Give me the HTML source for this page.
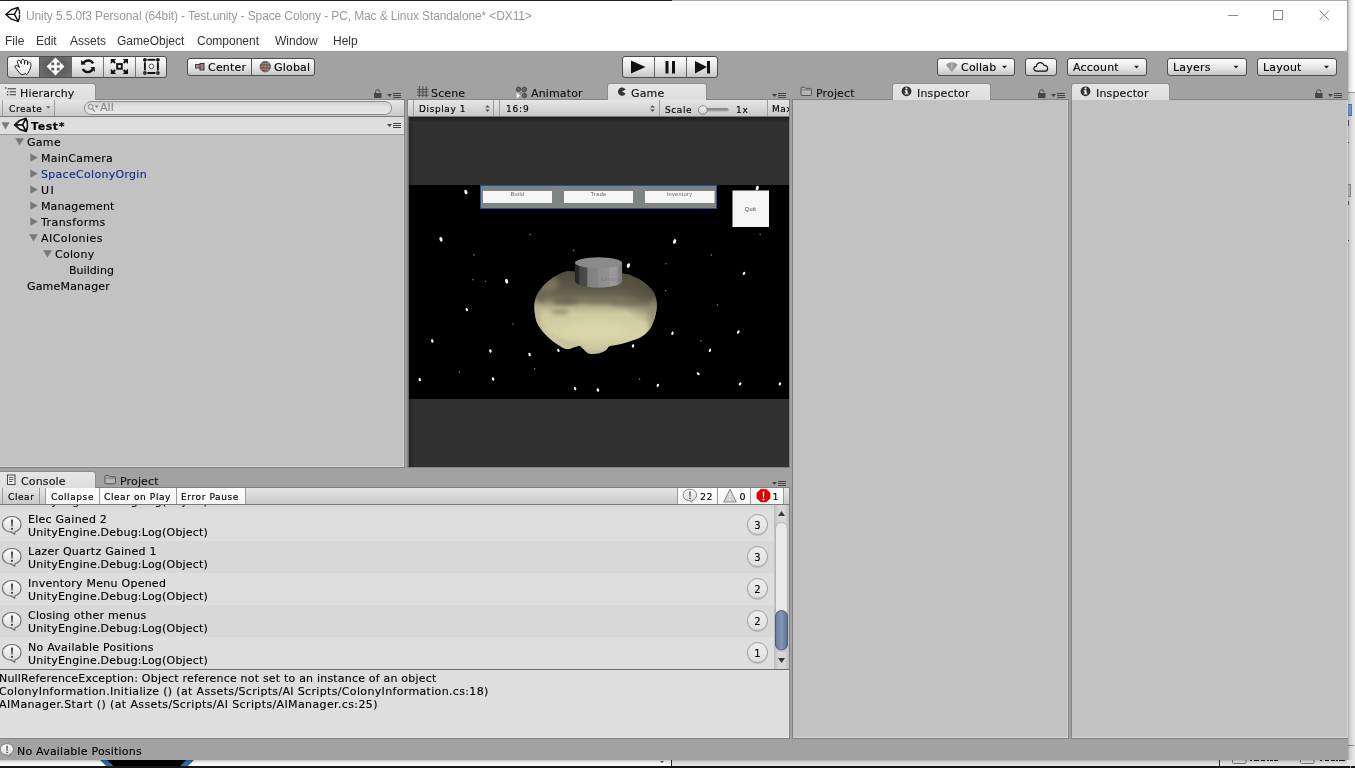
<!DOCTYPE html>
<html><head><meta charset="utf-8"><title>Unity</title>
<style>
*{box-sizing:border-box;margin:0;padding:0}
html,body{width:1355px;height:768px;overflow:hidden;background:#fff}
body{position:relative;font-family:"DejaVu Sans","Liberation Sans",sans-serif;font-size:11px;color:#000;letter-spacing:.3px;-webkit-text-stroke:.12px currentColor}
#win div,#win span,#win svg{position:absolute;white-space:nowrap}
#win{will-change:transform;position:absolute;left:0;top:0;width:1348px;height:760px;background:#a2a2a2;overflow:hidden}
#title{-webkit-text-stroke:0;left:0;top:1px;width:1347px;height:30px;background:#fff;font-family:"Liberation Sans",sans-serif;font-size:12px;color:#999;letter-spacing:-.12px}
#menu{-webkit-text-stroke:0;left:0;top:31px;width:1347px;height:20px;background:#fff;border-bottom:1px solid #f0f0f0;font-family:"Liberation Sans",sans-serif;font-size:12px;color:#333;letter-spacing:0}
#menu span{position:absolute;top:3px}
.btn{position:absolute;border:1px solid #4c4c4c;border-radius:3px;background:linear-gradient(#fefefe,#e8e8e8 50%,#c6c6c6);}
.tab{position:absolute;top:83px;height:17px;background:linear-gradient(#e6e6e6,#dedede);border:1px solid #8e8e8e;border-bottom:none;border-radius:3px 3px 0 0;z-index:3}
.tabtxt{z-index:4;position:absolute;top:87px;font-size:11px;letter-spacing:.15px;color:#111}
.panel{position:absolute;background:#c2c2c2;border:1px solid #828282;box-shadow:inset -1px -1px 0 rgba(255,255,255,.3)}
.tb{position:absolute;height:17px;background:linear-gradient(#e6e6e6,#c8c8c8);border-bottom:1px solid #7a7a7a}
.badge{position:absolute;width:21px;height:21px;border-radius:11px;background:linear-gradient(#ececec,#e0e0e0);border:1px solid #a0a0a0;box-shadow:0 1px 0 #bbb;text-align:center;line-height:20px;padding-top:1px;letter-spacing:0;font-size:10px}
.t9{font-size:9px;letter-spacing:.6px;-webkit-text-stroke:.15px currentColor}
.o{position:absolute}
</style></head><body>

<!-- OUTSIDE: other windows behind -->
<div id="out" style="position:absolute;left:0;top:0;width:1355px;height:768px;overflow:hidden">
 <div class="o" style="left:1347px;top:0;width:8px;height:92px;background:#fff"></div>
 <div class="o" style="left:1347px;top:92px;width:8px;height:676px;background:#e8e8e8;border-top:1px solid #9c9c9c"></div>
 <div class="o" style="left:1348px;top:104px;width:4px;height:12px;background:#7aa7dc;border:1px solid #4f82bd;border-left:none;border-radius:1px"></div>
 <div class="o" style="left:1348px;top:120px;width:1px;height:6px;background:#a04060"></div><div class="o" style="left:1348px;top:142px;width:1px;height:1px;background:#3050a0"></div><div class="o" style="left:1348px;top:240px;width:1px;height:1px;background:#3050a0"></div><div class="o" style="left:1348px;top:201px;width:1px;height:4px;background:#a04060"></div>
 <div class="o" style="left:1347px;top:184px;width:4px;height:13px;background:#c8c8c8;border:1px solid #999"></div>
 <div class="o" style="left:1347px;top:745px;width:7px;height:1px;background:#8a8a8a"></div>
 <div class="o" style="left:1348px;top:0;width:7px;height:768px;background:linear-gradient(to right,rgba(0,0,0,.26),rgba(0,0,0,.12) 25%,rgba(0,0,0,.04) 60%,rgba(0,0,0,0))"></div>
 <div class="o" style="left:0;top:760px;width:672px;height:8px;background:#fff"></div>
 <div class="o" style="left:672px;top:760px;width:683px;height:8px;background:#e6e6e6"></div>
 <svg class="o" style="left:0;top:760px" width="1355" height="8" viewBox="0 760 1355 8"><path d="M100 760L194 760L186 768L108 768Z" fill="#2e6da8"/><path d="M107 760L186 760L178.5 768L115.5 768Z" fill="#000"/><path d="M660 761L664 761L662 763Z" fill="#444"/><rect x="671" y="760" width="1" height="6" fill="#222"/><rect x="1219" y="760" width="1" height="6" fill="#333"/>
 <path d="M1232.5 760L1232.5 762.5Q1232.5 763.5 1233.5 763.5L1245 763.5Q1246 763.5 1246 762.5L1246 760M1300.500 760L1300.5 762.5Q1300.5 763.5 1301.5 763.5L1313 763.5Q1314 763.5 1314 762.5L1314 760" fill="none" stroke="#777" stroke-width="1"/>
 <g fill="#222"><rect x="1250" y="760" width="2" height="1"/><rect x="1254" y="760" width="5" height="1"/><rect x="1261" y="760" width="4" height="1"/><rect x="1267" y="760" width="2" height="1"/><rect x="1270" y="760" width="3" height="1"/><rect x="1274" y="760" width="4" height="1"/><rect x="1320" y="760" width="2" height="1"/><rect x="1325" y="760" width="4" height="1"/><rect x="1331" y="760" width="4" height="1"/><rect x="1336" y="760" width="2" height="1"/><rect x="1339" y="760" width="3" height="1"/><rect x="1342" y="760" width="3" height="1"/></g></svg>
 <div class="o" style="left:0;top:760px;width:1347px;height:6px;background:linear-gradient(rgba(0,0,0,.24),rgba(0,0,0,.1) 30%,rgba(0,0,0,.02) 70%,rgba(0,0,0,0))"></div>
 <div class="o" style="left:0;top:766px;width:1355px;height:2px;background:#151515"></div>
 <div class="o" style="left:1350px;top:766px;width:1px;height:2px;background:#999"></div>
</div>
<div id="win" class="abs">
<div style="left:0;top:0;width:672px;height:1px;background:#222"></div>
<div style="left:672px;top:0;width:675px;height:1px;background:#aaa"></div>
<div id="title"><span style="position:absolute;left:26px;top:8px;white-space:nowrap">Unity 5.5.0f3 Personal (64bit) - Test.unity - Space Colony - PC, Mac &amp; Linux Standalone* &lt;DX11&gt;</span></div>
<div id="menu"><span style="left:5px">File</span><span style="left:36px">Edit</span><span style="left:70px">Assets</span><span style="left:117px">GameObject</span><span style="left:197px">Component</span><span style="left:275px">Window</span><span style="left:333px">Help</span></div>

<!-- transform tools -->
<div class="btn" style="left:7px;top:56px;width:160px;height:22px;overflow:hidden">
 <div style="left:31px;top:0;width:33px;height:20px;background:radial-gradient(ellipse at center,#585858 25%,#727272 100%)"></div>
 <div style="left:31px;top:0;width:1px;height:20px;background:#555"></div>
 <div style="left:63px;top:0;width:1px;height:20px;background:#666"></div>
 <div style="left:95px;top:0;width:1px;height:20px;background:#777"></div>
 <div style="left:127px;top:0;width:1px;height:20px;background:#777"></div>
</div>
<!-- center/global -->
<div class="btn" style="left:187px;top:58px;width:128px;height:18px">
 <div style="left:63px;top:0;width:1px;height:16px;background:#555"></div>
 <span style="left:20px;top:2px;font-size:11px;letter-spacing:.2px">Center</span>
 <span style="left:86px;top:2px;font-size:11px;letter-spacing:.2px">Global</span>
</div>
<!-- play -->
<div class="btn" style="left:622px;top:56px;width:96px;height:22px">
 <div style="left:31px;top:0;width:1px;height:20px;background:#666"></div>
 <div style="left:63px;top:0;width:1px;height:20px;background:#666"></div>
 <svg style="left:0;top:0" width="94" height="20" viewBox="0 0 94 20"><path d="M8 3.5 L22.5 10 L8 16.5Z" fill="#111"/><rect x="42.5" y="4" width="3" height="12.5" fill="#111"/><rect x="49" y="4" width="3" height="12.5" fill="#111"/><path d="M72 4 L84 10 L72 16.5Z" fill="#111"/><rect x="84" y="4" width="3" height="12.5" fill="#111"/></svg>
</div>
<!-- right buttons -->
<div class="btn" style="left:937px;top:58px;width:78px;height:18px"><span style="left:23px;top:2px;font-size:11px;letter-spacing:.2px">Collab</span></div>
<div class="btn" style="left:1025px;top:58px;width:32px;height:18px"></div>
<div class="btn" style="left:1067px;top:58px;width:80px;height:18px"><span style="left:5px;top:2px;font-size:11px;letter-spacing:.2px">Account</span></div>
<div class="btn" style="left:1167px;top:58px;width:80px;height:18px"><span style="left:5px;top:2px;font-size:11px;letter-spacing:.2px">Layers</span></div>
<div class="btn" style="left:1257px;top:58px;width:80px;height:18px"><span style="left:5px;top:2px;font-size:11px;letter-spacing:.2px">Layout</span></div>
<!-- TOOLBAR -->

<!-- ============ HIERARCHY PANEL ============ -->
<div class="tab" style="left:-4px;width:100px"></div>
<span class="tabtxt" style="left:20px">Hierarchy</span>
<div class="panel" style="left:-1px;top:99px;width:406px;height:369px">
 <div class="tb" style="left:0;top:0;width:404px"></div>
 <div style="left:0;top:17px;width:404px;height:18px;background:#dedede;border-bottom:1px solid #9a9a9a"></div>
</div>
<div style="left:2px;top:100px;width:1px;height:16px;background:#9a9a9a"></div>
<div style="left:54px;top:100px;width:1px;height:16px;background:#9a9a9a"></div>
<span class="t9" style="left:9px;top:104px">Create</span>
<div style="left:84px;top:101px;width:308px;height:14px;border:1px solid #8e8e8e;border-radius:7px;background:linear-gradient(#cfcfcf,#e2e2e2 40%,#e6e6e6)"></div>
<span style="left:100px;top:101px;font-size:11px;color:#8a8a8a;letter-spacing:.1px">All</span>
<span style="left:31px;top:120px;font-size:11px;font-weight:bold;letter-spacing:.6px">Test*</span>
<svg style="left:0;top:134px" width="60" height="130" viewBox="0 134 60 130"><g fill="#777"><path d="M15.2 138.2L23.8 138.2L19.5 145.6Z"/><path d="M30.3 153.5L37.9 157.6L30.3 161.7Z"/><path d="M30.3 169.5L37.9 173.6L30.3 177.7Z"/><path d="M30.3 185.5L37.9 189.6L30.3 193.7Z"/><path d="M30.3 201.5L37.9 205.6L30.3 209.7Z"/><path d="M30.3 217.5L37.9 221.6L30.3 225.7Z"/><path d="M29.2 234.2L37.8 234.2L33.5 241.6Z"/><path d="M43.2 250.2L51.8 250.2L47.5 257.6Z"/></g></svg>
<div id="hier" style="left:0;top:0;letter-spacing:.3px">
<span style="left:27px;top:136px">Game</span>
<span style="left:41px;top:152px;letter-spacing:0.27px">MainCamera</span>
<span style="left:41px;top:168px;color:#102c90">SpaceColonyOrgin</span>
<span style="left:41px;top:184px;letter-spacing:1.5px">UI</span>
<span style="left:41px;top:200px;letter-spacing:0.1px">Management</span>
<span style="left:41px;top:216px;letter-spacing:0.43px">Transforms</span>
<span style="left:41px;top:232px;letter-spacing:0.43px">AIColonies</span>
<span style="left:55px;top:248px">Colony</span>
<span style="left:69px;top:264px;letter-spacing:0.04px">Building</span>
<span style="left:27px;top:280px;letter-spacing:0.18px">GameManager</span>
</div>
<!-- ============ GAME PANEL ============ -->
<span class="tabtxt" style="left:431px">Scene</span>
<span class="tabtxt" style="left:531px">Animator</span>
<div class="tab" style="left:607px;width:100px"></div>
<span class="tabtxt" style="left:631px">Game</span>
<div class="panel" style="left:407px;top:99px;width:383px;height:369px;background:#313131">
 <div class="tb" style="left:0;top:0;width:381px"></div>
</div>

<div style="left:413px;top:100px;width:1px;height:16px;background:#9a9a9a"></div><div style="left:493px;top:100px;width:1px;height:16px;background:#9a9a9a"></div><div style="left:499px;top:100px;width:1px;height:16px;background:#9a9a9a"></div><div style="left:659px;top:100px;width:1px;height:16px;background:#9a9a9a"></div><div style="left:767px;top:100px;width:1px;height:16px;background:#9a9a9a"></div>
<span class="t9" style="left:419px;top:104px">Display 1</span>
<span class="t9" style="left:506px;top:104px;letter-spacing:.8px">16:9</span>
<span class="t9" style="left:665px;top:105px">Scale</span>
<span class="t9" style="left:736px;top:105px;letter-spacing:.8px">1x</span>
<span class="t9" style="left:772px;top:104px;width:17px;overflow:hidden">Max</span>
<!--GV--><svg style="left:408px;top:117px" width="381" height="350" viewBox="408 117 381 350">
<defs>
<linearGradient id="ag" gradientUnits="userSpaceOnUse" x1="0" y1="271" x2="0" y2="354"><stop offset="0" stop-color="#4e4b3b"/><stop offset=".2" stop-color="#5c5846"/><stop offset=".29" stop-color="#6b6752"/><stop offset=".37" stop-color="#8f896e"/><stop offset=".44" stop-color="#b8b28f"/><stop offset=".52" stop-color="#d0caa1"/><stop offset=".77" stop-color="#d9d3a9"/><stop offset=".93" stop-color="#cdc79e"/><stop offset="1" stop-color="#b9b38e"/></linearGradient><clipPath id="acl"><path d="M575.2 271.5C565.7 271.1 568.8 270.9 565.8 271.5C562.9 272.1 560.1 273.5 557.2 275.1C554.4 276.6 551.3 278.7 548.7 280.8C546.0 283.0 543.5 285.5 541.5 288.0C539.5 290.5 537.7 293.1 536.5 295.8C535.3 298.6 534.6 301.3 534.3 304.4C534.1 307.5 534.6 311.4 535.0 314.5C535.5 317.6 535.9 320.2 537.2 323.1C538.5 325.9 540.7 328.9 542.9 331.7C545.2 334.4 548.2 337.3 550.8 339.5C553.4 341.8 556.4 343.8 558.7 345.3C561.0 346.8 562.6 348.0 564.4 348.6C566.2 349.2 567.5 349.2 569.4 348.9C571.3 348.5 574.1 347.1 575.9 346.7C577.7 346.3 578.9 345.8 580.2 346.3C581.5 346.8 582.6 348.5 583.8 349.6C584.9 350.7 585.9 352.1 587.3 352.9C588.8 353.6 590.2 353.9 592.3 353.9C594.5 353.9 598.0 353.5 600.2 352.9C602.5 352.3 604.4 351.4 606.0 350.3C607.5 349.2 607.6 347.2 609.5 346.3C611.5 345.4 614.2 345.6 617.4 344.8C620.6 344.1 625.1 342.9 628.9 341.7C632.7 340.4 637.0 339.3 640.3 337.4C643.7 335.5 646.7 333.1 648.9 330.2C651.2 327.4 652.7 323.5 654.0 320.2C655.2 316.9 655.9 313.0 656.4 310.2C656.9 307.3 657.1 305.6 656.8 303.0C656.5 300.4 656.0 297.2 654.7 294.4C653.4 291.7 651.1 288.8 648.9 286.5C646.8 284.3 644.4 282.5 641.8 280.8C639.1 279.1 636.4 277.7 633.2 276.5C630.0 275.3 632.1 274.5 622.4 273.6C612.8 272.8 584.6 271.8 575.2 271.5Z"/></clipPath><radialGradient id="ard" gradientUnits="userSpaceOnUse" cx="652" cy="290" r="34"><stop offset="0" stop-color="#4e4b3b" stop-opacity=".85"/><stop offset="1" stop-color="#4e4b3b" stop-opacity="0"/></radialGradient><filter id="bl2"><feGaussianBlur stdDeviation="2.2"/></filter>
<radialGradient id="ar" cx=".5" cy=".6" r=".55"><stop offset=".7" stop-color="#000" stop-opacity="0"/><stop offset="1" stop-color="#3a3828" stop-opacity=".55"/></radialGradient>
<linearGradient id="cg" x1="0" y1="0" x2="1" y2="0"><stop offset="0" stop-color="#262626"/><stop offset=".09" stop-color="#2c2c2c"/><stop offset=".1" stop-color="#444"/><stop offset=".26" stop-color="#4d4d4d"/><stop offset=".27" stop-color="#808080"/><stop offset=".49" stop-color="#858585"/><stop offset=".5" stop-color="#8d8d8d"/><stop offset=".72" stop-color="#929292"/><stop offset=".73" stop-color="#9a9a9a"/><stop offset=".9" stop-color="#969696"/><stop offset=".91" stop-color="#848484"/><stop offset="1" stop-color="#7a7a7a"/></linearGradient>
<filter id="bl"><feGaussianBlur stdDeviation=".5"/></filter>
<linearGradient id="shv" x1="0" y1="0" x2="0" y2="1"><stop offset="0" stop-color="#1c1c1c"/><stop offset="1" stop-color="#313131"/></linearGradient><linearGradient id="sh" x1="0" y1="0" x2="1" y2="0"><stop offset="0" stop-color="#222"/><stop offset="1" stop-color="#313131"/></linearGradient>
</defs>
<rect x="408" y="117" width="381" height="350" fill="#313131"/>
<rect x="408" y="117" width="7" height="350" fill="url(#sh)"/>
<rect x="408" y="117" width="381" height="6" fill="url(#shv)"/><rect x="408" y="185" width="381" height="214" fill="#000"/>
<rect x="408" y="117" width="1" height="350" fill="#6a6a6a"/><g fill="#fff" filter="url(#bl)"><ellipse cx="465.9" cy="192.0" rx="1.5" ry="2.4" transform="rotate(-20 465.9 192.0)"/><ellipse cx="757.2" cy="188.0" rx="1.5" ry="2.4" transform="rotate(20 757.2 188.0)"/><ellipse cx="441.0" cy="239.3" rx="1.5" ry="2.4" transform="rotate(-20 441.0 239.3)"/><ellipse cx="674.6" cy="241.4" rx="1.5" ry="2.4" transform="rotate(20 674.6 241.4)"/><ellipse cx="628.4" cy="265.6" rx="1.5" ry="2.4" transform="rotate(20 628.4 265.6)"/><ellipse cx="506.6" cy="281.2" rx="1.5" ry="2.4" transform="rotate(-20 506.6 281.2)"/><ellipse cx="744.0" cy="273.4" rx="1.15" ry="1.75" transform="rotate(35 744.0 273.4)"/><ellipse cx="466.8" cy="309.6" rx="1.15" ry="1.75" transform="rotate(-20 466.8 309.6)"/><ellipse cx="672.5" cy="333.3" rx="1.15" ry="1.75" transform="rotate(20 672.5 333.3)"/><ellipse cx="738.3" cy="332.0" rx="1.15" ry="1.75" transform="rotate(35 738.3 332.0)"/><ellipse cx="432.3" cy="341.0" rx="1.15" ry="1.75" transform="rotate(-20 432.3 341.0)"/><ellipse cx="490.4" cy="351.0" rx="1.15" ry="1.75" transform="rotate(-20 490.4 351.0)"/><ellipse cx="558.4" cy="350.4" rx="1.15" ry="1.75" transform="rotate(-20 558.4 350.4)"/><ellipse cx="529.6" cy="354.5" rx="1.15" ry="1.75" transform="rotate(-20 529.6 354.5)"/><ellipse cx="709.9" cy="350.4" rx="1.15" ry="1.75" transform="rotate(20 709.9 350.4)"/><ellipse cx="419.8" cy="379.7" rx="1.15" ry="1.75" transform="rotate(-20 419.8 379.7)"/><ellipse cx="493.1" cy="379.0" rx="1.15" ry="1.75" transform="rotate(-20 493.1 379.0)"/><ellipse cx="575.1" cy="388.7" rx="1.15" ry="1.75" transform="rotate(-20 575.1 388.7)"/><ellipse cx="597.9" cy="390.0" rx="1.15" ry="1.75" transform="rotate(-20 597.9 390.0)"/><ellipse cx="657.8" cy="385.4" rx="1.15" ry="1.75" transform="rotate(20 657.8 385.4)"/><ellipse cx="740.1" cy="383.9" rx="1.15" ry="1.75" transform="rotate(35 740.1 383.9)"/><ellipse cx="779.9" cy="383.9" rx="1.15" ry="1.75" transform="rotate(20 779.9 383.9)"/><ellipse cx="698.2" cy="373.7" rx="1.15" ry="1.75" transform="rotate(-50 698.2 373.7)"/><ellipse cx="633.0" cy="346.0" rx="1.15" ry="1.75" transform="rotate(20 633.0 346.0)"/></g>
<g fill="#777" filter="url(#bl)"><circle cx="530.2" cy="234.5" r=".8"/><circle cx="760.2" cy="234.5" r=".8"/><circle cx="474.0" cy="254.9" r=".8"/><circle cx="573.7" cy="250.4" r=".8"/><circle cx="711.4" cy="254.9" r=".8"/><circle cx="665.9" cy="263.8" r=".8"/><circle cx="472.8" cy="279.7" r=".8"/><circle cx="485.3" cy="281.2" r=".8"/><circle cx="665.6" cy="290.8" r=".8"/><circle cx="717.4" cy="304.9" r=".8"/><circle cx="512.9" cy="324.0" r=".8"/><circle cx="700.9" cy="340.8" r=".8"/><circle cx="459.3" cy="371.9" r=".8"/><circle cx="534.7" cy="368.9" r=".8"/><circle cx="639.5" cy="379.1" r=".8"/></g>
<g filter="url(#bl)">
<path d="M575.2 271.5C565.7 271.1 568.8 270.9 565.8 271.5C562.9 272.1 560.1 273.5 557.2 275.1C554.4 276.6 551.3 278.7 548.7 280.8C546.0 283.0 543.5 285.5 541.5 288.0C539.5 290.5 537.7 293.1 536.5 295.8C535.3 298.6 534.6 301.3 534.3 304.4C534.1 307.5 534.6 311.4 535.0 314.5C535.5 317.6 535.9 320.2 537.2 323.1C538.5 325.9 540.7 328.9 542.9 331.7C545.2 334.4 548.2 337.3 550.8 339.5C553.4 341.8 556.4 343.8 558.7 345.3C561.0 346.8 562.6 348.0 564.4 348.6C566.2 349.2 567.5 349.2 569.4 348.9C571.3 348.5 574.1 347.1 575.9 346.7C577.7 346.3 578.9 345.8 580.2 346.3C581.5 346.8 582.6 348.5 583.8 349.6C584.9 350.7 585.9 352.1 587.3 352.9C588.8 353.6 590.2 353.9 592.3 353.9C594.5 353.9 598.0 353.5 600.2 352.9C602.5 352.3 604.4 351.4 606.0 350.3C607.5 349.2 607.6 347.2 609.5 346.3C611.5 345.4 614.2 345.6 617.4 344.8C620.6 344.1 625.1 342.9 628.9 341.7C632.7 340.4 637.0 339.3 640.3 337.4C643.7 335.5 646.7 333.1 648.9 330.2C651.2 327.4 652.7 323.5 654.0 320.2C655.2 316.9 655.9 313.0 656.4 310.2C656.9 307.3 657.1 305.6 656.8 303.0C656.5 300.4 656.0 297.2 654.7 294.4C653.4 291.7 651.1 288.8 648.9 286.5C646.8 284.3 644.4 282.5 641.8 280.8C639.1 279.1 636.4 277.7 633.2 276.5C630.0 275.3 632.1 274.5 622.4 273.6C612.8 272.8 584.6 271.8 575.2 271.5Z" fill="url(#ag)"/>
<g clip-path="url(#acl)">
<rect x="620" y="260" width="50" height="70" fill="url(#ard)"/>
<g filter="url(#bl2)">
<ellipse cx="548" cy="284" rx="11" ry="8" fill="#8f896e" opacity=".55"/><ellipse cx="566" cy="301" rx="14" ry="3.5" fill="#5f5b49" opacity=".75"/><ellipse cx="625" cy="303" rx="16" ry="4" fill="#6a6652" opacity=".55"/>
<ellipse cx="600" cy="300" rx="22" ry="4" fill="#6e6a55" opacity=".6"/>
<ellipse cx="560" cy="312" rx="9" ry="2.5" fill="#77725c" opacity=".6"/>
<ellipse cx="541" cy="297" rx="5" ry="6" fill="#6a6652" opacity=".6"/>
<ellipse cx="596" cy="330" rx="30" ry="10" fill="#ddd7ad" opacity=".6"/>
<path d="M535 318C545 335 560 345 585 348" stroke="#bdb792" stroke-width="4" fill="none" opacity=".7"/>
<ellipse cx="653" cy="318" rx="5" ry="18" fill="#8f8a6e" opacity=".7"/>
<ellipse cx="537" cy="320" rx="3.5" ry="18" fill="#b3ad8b" opacity=".7"/>
</g>
</g>
<path d="M574.9 263 L574.9 281 A23.6 6.6 0 0 0 622.1 281 L622.1 263Z" fill="url(#cg)"/>
<ellipse cx="598.5" cy="262.7" rx="23.6" ry="5.4" fill="#8a8a8a"/>
</g>
<text x="601" y="281" font-family="Liberation Sans,sans-serif" font-size="4.5" fill="#777" textLength="17">Colony</text>
<rect x="480.5" y="185.5" width="236" height="23" fill="#7e8482" stroke="#1f4fa8"/>
<rect x="483" y="191" width="69" height="12" fill="#f5f5f5"/><rect x="564" y="191" width="69" height="12" fill="#f5f5f5"/><rect x="645" y="191" width="69.5" height="12" fill="#f5f5f5"/>
<rect x="732.5" y="190.5" width="36.5" height="36.5" fill="#f5f5f5"/>
<g font-family="Liberation Sans,sans-serif" font-size="5.6" fill="#666" text-anchor="middle"><text x="517.5" y="196">Build</text><text x="598.5" y="196">Trade</text><text x="679.5" y="196">Inventory</text><text x="750.5" y="210.6" fill="#444">Quit</text></g>
</svg><!--/GV-->
<!-- ============ RIGHT PANELS ============ -->
<span class="tabtxt" style="left:816px">Project</span>
<div class="tab" style="left:892px;width:99px"></div>
<span class="tabtxt" style="left:917px">Inspector</span>
<div class="panel" style="left:792px;top:99px;width:277px;height:640px"></div>
<div class="tab" style="left:1071px;width:99px"></div>
<span class="tabtxt" style="left:1096px">Inspector</span>
<div class="panel" style="left:1071px;top:99px;width:278px;height:640px"></div>
<!-- ============ CONSOLE ============ -->
<div class="tab" style="left:-4px;top:471px;width:100px"></div>
<span class="tabtxt" style="left:21px;top:475px">Console</span>
<span class="tabtxt" style="left:120px;top:475px">Project</span>
<div class="panel" style="left:-1px;top:487px;width:791px;height:252px;background:#dedede">
 <div class="tb" style="left:0;top:0;width:789px"></div>
 <div style="left:0;top:181px;width:789px;height:1px;background:#6e6e6e;z-index:2"></div>
</div>
<span style="left:-1px;top:672px;letter-spacing:.2px">NullReferenceException: Object reference not set to an instance of an object</span>
<span style="left:-1px;top:685px;letter-spacing:.34px">ColonyInformation.Initialize () (at Assets/Scripts/AI Scripts/ColonyInformation.cs:18)</span>
<span style="left:-1px;top:698px;letter-spacing:.375px">AIManager.Start () (at Assets/Scripts/AI Scripts/AIManager.cs:25)</span>
<!--ROWS--><svg style="left:0;top:0" width="0" height="0"><defs>
<linearGradient id="bg1" x1="0" y1="0" x2="0" y2="1"><stop offset="0" stop-color="#fff"/><stop offset="1" stop-color="#d4d4d4"/></linearGradient>
<g id="bub"><path d="M11 1.5C16.2 1.5 20 5 20 9.3C20 13 17.5 15.6 14.2 16.7L13.6 19.2L10.6 17.2C5.2 17.2 1.5 13.6 1.5 9.3C1.5 5 5.4 1.5 11 1.5Z" fill="url(#bg1)" stroke="#6e6e6e" stroke-width="1.2"/><path d="M9.9 4.4L10.4 11.6L11.6 11.6L12.1 4.4Z" fill="#484848"/><circle cx="11" cy="13.8" r="1.15" fill="#484848"/></g>
</defs></svg><div style="left:0;top:505px;width:774px;height:4px;background:#d8d8d8;overflow:hidden"><span style="left:28px;top:-10px;letter-spacing:.21px">UnityEngine.Debug:Log(Object)</span></div>
<div style="left:0;top:509px;width:774px;height:32px;background:#dedede"></div><svg style="left:1px;top:515px" width="22" height="20" viewBox="0 0 22 20"><use href="#bub"/></svg><span style="left:28px;top:513px;letter-spacing:.25px">Elec Gained 2</span><span style="left:28px;top:526px;letter-spacing:.21px">UnityEngine.Debug:Log(Object)</span><div class="badge" style="left:747px;top:514px">3</div>
<div style="left:0;top:541px;width:774px;height:32px;background:#d8d8d8"></div><svg style="left:1px;top:547px" width="22" height="20" viewBox="0 0 22 20"><use href="#bub"/></svg><span style="left:28px;top:545px;letter-spacing:.25px">Lazer Quartz Gained 1</span><span style="left:28px;top:558px;letter-spacing:.21px">UnityEngine.Debug:Log(Object)</span><div class="badge" style="left:747px;top:546px">3</div>
<div style="left:0;top:573px;width:774px;height:32px;background:#dedede"></div><svg style="left:1px;top:579px" width="22" height="20" viewBox="0 0 22 20"><use href="#bub"/></svg><span style="left:28px;top:577px;letter-spacing:.25px">Inventory Menu Opened</span><span style="left:28px;top:590px;letter-spacing:.21px">UnityEngine.Debug:Log(Object)</span><div class="badge" style="left:747px;top:578px">2</div>
<div style="left:0;top:605px;width:774px;height:32px;background:#d8d8d8"></div><svg style="left:1px;top:611px" width="22" height="20" viewBox="0 0 22 20"><use href="#bub"/></svg><span style="left:28px;top:609px;letter-spacing:.25px">Closing other menus</span><span style="left:28px;top:622px;letter-spacing:.21px">UnityEngine.Debug:Log(Object)</span><div class="badge" style="left:747px;top:610px">2</div>
<div style="left:0;top:637px;width:774px;height:32px;background:#dedede"></div><svg style="left:1px;top:643px" width="22" height="20" viewBox="0 0 22 20"><use href="#bub"/></svg><span style="left:28px;top:641px;letter-spacing:.25px">No Available Positions</span><span style="left:28px;top:654px;letter-spacing:.21px">UnityEngine.Debug:Log(Object)</span><div class="badge" style="left:747px;top:642px">1</div>

<div style="left:2px;top:488px;width:1px;height:16px;background:#9a9a9a"></div>
<div style="left:39px;top:488px;width:1px;height:16px;background:#9a9a9a"></div>
<div style="left:45px;top:488px;width:1px;height:16px;background:#9a9a9a"></div>
<div style="left:46px;top:488px;width:199px;height:16px;background:linear-gradient(#fff,#f4f4f4)"></div>
<div style="left:99px;top:488px;width:1px;height:16px;background:#9a9a9a"></div>
<div style="left:176px;top:488px;width:1px;height:16px;background:#9a9a9a"></div>
<div style="left:245px;top:488px;width:1px;height:16px;background:#9a9a9a"></div>
<span class="t9" style="left:8px;top:492px">Clear</span>
<span class="t9" style="left:51px;top:492px">Collapse</span>
<span class="t9" style="left:104px;top:492px">Clear on Play</span>
<span class="t9" style="left:181px;top:492px">Error Pause</span>
<div style="left:678px;top:488px;width:105px;height:16px;background:linear-gradient(#fff,#f4f4f4)"></div>
<div style="left:677px;top:488px;width:1px;height:16px;background:#9a9a9a"></div>
<div style="left:717px;top:488px;width:1px;height:16px;background:#9a9a9a"></div>
<div style="left:750px;top:488px;width:1px;height:16px;background:#9a9a9a"></div>
<div style="left:783px;top:488px;width:1px;height:16px;background:#9a9a9a"></div>
<svg style="left:682px;top:488px" width="16" height="15" viewBox="0 0 22 20"><use href="#bub"/></svg>
<span style="left:700px;top:491px;letter-spacing:.5px;font-size:9.5px">22</span>
<svg style="left:722px;top:488px" width="16" height="16" viewBox="0 0 16 16"><path d="M8 1.2L14.3 14L1.7 14Z" fill="#cfcfcf" stroke="#8c8c8c" stroke-width="1" stroke-linejoin="round"/><path d="M7.4 5L8.6 5L8.3 10.4L7.7 10.4Z" fill="#f4f4f4"/><circle cx="8" cy="12" r=".8" fill="#f4f4f4"/></svg>
<span style="left:739.5px;top:491px;letter-spacing:0;font-size:9.5px">0</span>
<svg style="left:755.5px;top:488px" width="15" height="15" viewBox="0 0 16 16"><path d="M5 1.2L11 1.2L15 5.2L15 10.8L11 14.8L5 14.8L1 10.8L1 5.2Z" fill="#e00000" stroke="#c40000" stroke-width=".6"/><path d="M7.1 3.6L8.9 3.6L8.5 10L7.5 10Z" fill="#fff"/><circle cx="8" cy="12.2" r="1.1" fill="#fff"/></svg>
<span style="left:772.5px;top:491px;letter-spacing:0;font-size:9.5px">1</span>

<div style="left:774px;top:505px;width:15px;height:164px;background:linear-gradient(to right,#bdbdbd,#d6d6d6 30%,#d6d6d6 70%,#bdbdbd)"></div>
<svg style="left:774px;top:505px" width="15" height="164" viewBox="0 0 15 164"><path d="M4 11L11 11L7.5 6Z" fill="#3a3a3a"/><path d="M4 153L11 153L7.5 158Z" fill="#3a3a3a"/>
<rect x="1.5" y="17.5" width="12" height="129" rx="6" fill="#e9e9e9" stroke="#b5b5b5"/>
<defs><linearGradient id="thg" x1="0" y1="0" x2="1" y2="0"><stop offset="0" stop-color="#6c7d9b"/><stop offset=".5" stop-color="#8296b8"/><stop offset="1" stop-color="#5d6f8e"/></linearGradient></defs>
<rect x="1.5" y="105.5" width="12" height="39.5" rx="6" fill="url(#thg)" stroke="#4a5a78"/></svg>
<svg style="left:0;top:470px;z-index:5" width="130" height="18" viewBox="0 470 130 18"><rect x="7.5" y="475" width="7.5" height="9.5" fill="#eee" stroke="#444" stroke-width="1"/><path d="M9 477.5L13.5 477.5M9 479.5L13.5 479.5M9 481.5L12.5 481.5" stroke="#555" stroke-width=".9"/><use href="#fold" x="104.5" y="475.5"/></svg>
<svg style="left:772px;top:481px" width="15" height="6" viewBox="0 0 15 6"><use href="#pmenu"/></svg>
<svg style="left:0;top:740px" width="20" height="20" viewBox="0 0 22 20"><g transform="translate(-.8,2) scale(.78)"><use href="#bub"/></g></svg>
<!--/ROWS-->
<!-- ============ STATUS ============ -->
<span style="left:17px;top:745px;letter-spacing:.21px">No Available Positions</span>

<!--ICONS-->
<svg style="left:0;top:0;z-index:5" width="1347" height="135" viewBox="0 0 1347 135">
<defs>
<g id="ulogo" fill="none" stroke="#111" stroke-linejoin="round" stroke-linecap="round"><path d="M5.9 14.4L14.4 14.4M14.4 14.4L17.9 7.7M14.4 14.4L18.2 21.2"/><path d="M19.5 13.5Q19.9 11 17.9 7.5L11.4 9.7L5.9 14.4L11.4 19.2L18.2 21.4Q19.9 18 19.5 15.3"/></g>
<g id="lock"><rect x="0" y="4.5" width="7.5" height="5" fill="#484848"/><path d="M1.5 4.5L1.5 3.4A2.2 2.2 0 0 1 5.9 3.4L5.9 3.9" fill="none" stroke="#505050" stroke-width="1"/></g>
<g id="pmenu" fill="#444"><path d="M0 1L5 1L2.5 4Z"/><rect x="6" y="0" width="8" height="1"/><rect x="6" y="2" width="8" height="1"/><rect x="6" y="4" width="8" height="1"/></g>
<g id="dd" fill="#222"><path d="M0 0L5 0L2.5 2.8Z"/></g>
<g id="fold"><path d="M.5 1.8L.5 1C.5 .4 1 0 1.6 0L4.2 0L5.4 1.2L10 1.2C10.6 1.2 11 1.6 11 2.2L11 7.4C11 7.9 10.6 8.3 10 8.3L1.5 8.3C.9 8.3 .5 7.9 .5 7.4Z" fill="#b4b4b4" stroke="#555" stroke-width="1"/><path d="M.8 2.6L10.8 2.6" stroke="#666" stroke-width=".8"/></g>
<g id="insp"><circle cx="0" cy="0" r="4.9" fill="#333"/><rect x="-.9" y="-1" width="1.9" height="3.4" fill="#fff"/><rect x="-1.7" y="-1" width="1.7" height="1" fill="#fff"/><rect x="-1.8" y="2" width="3.7" height="1" fill="#fff"/><circle cx="0" cy="-2.7" r="1" fill="#fff"/></g>
</defs>
<!-- title -->
<use href="#ulogo" stroke-width="1.35"/>
<g stroke="#8a8a8a" stroke-width="1" fill="none"><path d="M1228 15.5L1238 15.5"/><rect x="1273.5" y="10.5" width="9" height="9"/><path d="M1319.5 10.5L1329 20M1329 10.5L1319.5 20"/></g>
<!-- hand -->
<path d="M19.5 67.5L18 64L17.2 61.6C17.2 60.4 18.2 60.1 18.9 60.3C19.8 60.4 20.2 60.8 20.4 61.4L21.3 63.6L21.4 60.6C21.6 59.6 22.4 59.3 22.9 59.3C23.6 59.3 24.2 59.7 24.3 60.6L24.5 64.3L24.9 60.9C25.1 60.3 25.6 60.1 26.2 60.2C27 60.4 27.4 60.9 27.5 61.6L27.6 64.9L28 62.6C28.2 62.1 28.7 61.9 29.3 62.1C30.3 62.4 30.7 62.9 30.8 63.6C31 65 30.9 66.4 30.5 67.8C30 69.6 28.9 71.4 27.8 73.3L26.6 74.6L25.2 73.6C24.2 74.3 23 74.6 21.8 74.6C21 74.4 20.5 74 20 73.5L16.6 69.2C15.8 68.3 15.2 67.5 15 66.8C15 66 15.4 65.6 16 65.5C16.6 65.4 17.1 65.6 17.6 65.9Z" fill="rgba(255,255,255,.55)" stroke="#111" stroke-width=".9" stroke-linejoin="round"/>
<!-- move -->
<path d="M55.5 57.6L60.2 62.4L56.8 62.4L56.8 65.2L59.7 65.2L59.7 61.8L64.4 66.5L59.7 71.2L59.7 67.8L56.8 67.8L56.8 70.6L60.2 70.6L55.5 75.4L50.8 70.6L54.2 70.6L54.2 67.8L51.3 67.8L51.3 71.2L46.6 66.5L51.3 61.8L51.3 65.2L54.2 65.2L54.2 62.4L50.8 62.4Z" fill="#fff"/>
<!-- rotate -->
<g fill="none" stroke="#111" stroke-width="2.3"><path d="M83.5 63A5.6 5.6 0 0 1 93 63.3"/><path d="M82.8 69A5.6 5.6 0 0 0 92.6 69.4"/></g>
<path d="M81.1 59.9L81.1 64.8L85.8 64.6Z" fill="#111"/><path d="M94.8 71.9L94.8 67L90.3 67.2Z" fill="#111"/>
<!-- scale -->
<rect x="117.2" y="64.1" width="4.6" height="4.6" fill="#fff" stroke="#111" stroke-width="2"/>
<g stroke="#111" stroke-width="2" fill="none"><path d="M115.2 62.9L112 59.9M123.6 62.9L126.8 59.9M115.2 69.9L112 72.9M123.6 69.9L126.8 72.9"/></g>
<g fill="#111"><path d="M110.8 58.9L116.2 58.9L110.8 64.1Z"/><path d="M128 58.9L122.6 58.9L128 64.1Z"/><path d="M110.8 73.9L116.2 73.9L110.8 68.7Z"/><path d="M128 73.9L122.6 73.9L128 68.7Z"/></g>
<!-- rect tool -->
<g stroke="#111" stroke-width="1.9"><path d="M147.4 59.8L155.4 59.8M147.4 73L155.4 73M144.9 62.2L144.9 70.6M157.9 62.2L157.9 70.6"/></g>
<g fill="#111"><circle cx="144.9" cy="59.8" r="1.9"/><circle cx="157.9" cy="59.8" r="1.9"/><circle cx="144.9" cy="73" r="1.9" fill="#333"/><circle cx="157.9" cy="73" r="1.9" fill="#333"/></g>
<circle cx="151.4" cy="66.4" r="2.3" fill="#f4f4f4" stroke="#444" stroke-width=".9"/>
<!-- center icon -->
<rect x="195.5" y="64.5" width="4" height="3.5" fill="#999" stroke="#444" stroke-width="1"/><rect x="200" y="63.5" width="4" height="6.5" fill="#8a8a8a" stroke="#333" stroke-width="1"/><path d="M199 64.8L201.6 66.3L199 67.8Z" fill="#f03050"/>
<!-- global icon -->
<circle cx="265.3" cy="66.6" r="5.3" fill="#5a5a5a" stroke="#444" stroke-width=".6"/>
<g stroke="#999" stroke-width=".7" fill="none"><path d="M261 63.6L269.6 63.6M260.2 66.4L270.4 66.4M261 69.6L269.6 69.6M265.3 61.4L265.3 71.8M268 62L268 71.2"/></g>
<path d="M262.5 63.8L262.5 69L267.2 69" stroke="#f04058" stroke-width="1.3" fill="none"/>
<!-- collab -->
<path d="M946 65C948.5 61.4 955 61.4 957.6 65L951.8 72Z" fill="#999"/><rect x="951.3" y="63.4" width="1.1" height="4" fill="#c4c4c4"/><rect x="951.3" y="68.2" width="1.1" height="1.1" fill="#c4c4c4"/>
<use href="#dd" x="1002" y="65.8"/>
<!-- cloud -->
<path d="M1036.8 71.2C1034.6 71.2 1033.6 69.6 1033.9 68.2C1034.2 66.8 1035.4 66.2 1036.4 66.3C1036.4 63.8 1038.6 62.4 1040.6 62.6C1042.4 62.8 1043.6 63.9 1044 65.4C1046.2 65.2 1047.6 66.6 1047.6 68.4C1047.6 70 1046.4 71.2 1044.8 71.2Z" fill="none" stroke="#111" stroke-width="1.2"/>
<use href="#dd" x="1134" y="65.8"/><use href="#dd" x="1233.5" y="65.8"/><use href="#dd" x="1324" y="65.8"/>
<!-- hierarchy tab icon -->
<g fill="#333"><rect x="5" y="87.3" width="1.4" height="1.3"/><rect x="7.7" y="88.3" width="8.3" height="1"/><rect x="6.9" y="91.2" width="1.4" height="1.2"/><rect x="9.6" y="91.3" width="6.4" height="1"/><rect x="6.9" y="94.1" width="1.4" height="1.2"/><rect x="9.6" y="94.2" width="6.4" height="1"/></g>
<use href="#lock" x="374" y="88.5"/><use href="#pmenu" x="387" y="93"/>
<use href="#pmenu" x="387" y="123" />
<!-- create arrow, search -->
<path d="M46 106.2L50.6 106.2L48.3 108.8Z" fill="#666"/>
<circle cx="90.6" cy="106.8" r="2.4" fill="none" stroke="#888" stroke-width="1"/><path d="M92.3 108.7L95 111.6" stroke="#888" stroke-width="1.2"/><path d="M94.6 105.6L98.6 105.6L96.6 108Z" fill="#777"/>
<!-- Test row -->
<path d="M1.5 122.2L9.6 122.2L5.5 129.6Z" fill="#7a7a7a"/>
<g transform="translate(9.2,111.5) scale(.93)"><path d="M5.9 14.4L11.4 9.7L17.9 7.5Q19.9 11 19.5 14.4Q19.9 18 18.2 21.4L11.4 19.2Z" fill="#fff"/><use href="#ulogo" stroke-width="1.9"/></g>
<!-- scene tab icon -->
<g stroke="#444" stroke-width=".9" fill="none"><path d="M419.4 86L419.4 97M422.9 86L422.9 97M426.2 86L426.2 97M417 89.4L428.4 89.4M417 92L428.4 92M417 95.2L428.4 95.2"/></g>
<!-- animator icon -->
<g stroke="#555" stroke-width=".7" fill="none"><path d="M518.6 89.3L524.4 89.3L524.4 95.5M523 91L520 94.5"/></g>
<g fill="#666" stroke="#3c3c3c" stroke-width=".8"><circle cx="518.6" cy="89.3" r="2.2"/><circle cx="524.4" cy="89.3" r="2.2"/><circle cx="524.4" cy="95.5" r="2.2"/></g>
<path d="M516.6 92.8L516.6 98.6L520.2 95.6Z" fill="#fff"/>
<!-- game icon -->
<path d="M622 91.6L625.6 89.6A4.1 4.1 0 1 0 625.6 93.7Z" fill="#333"/>
<use href="#pmenu" x="772" y="93"/>
<!-- game toolbar -->
<g fill="#444"><path d="M485.2 107.6L489.8 107.6L487.5 105.2Z"/><path d="M485.2 109.4L489.8 109.4L487.5 111.8Z"/><path d="M650.2 107.6L654.8 107.6L652.5 105.2Z"/><path d="M650.2 109.4L654.8 109.4L652.5 111.8Z"/></g>
<defs><linearGradient id="trk" x1="0" y1="0" x2="0" y2="1"><stop offset="0" stop-color="#6e6e6e"/><stop offset="1" stop-color="#b8b8b8"/></linearGradient><linearGradient id="knb" x1="0" y1="0" x2="0" y2="1"><stop offset="0" stop-color="#fff"/><stop offset="1" stop-color="#c8c8c8"/></linearGradient></defs>
<rect x="700" y="108.2" width="28.6" height="3.5" rx="1.7" fill="url(#trk)"/>
<circle cx="702.8" cy="110" r="4.3" fill="url(#knb)" stroke="#777" stroke-width=".9"/>
<!-- right tabs -->
<use href="#fold" x="800.5" y="87.2"/>
<use href="#insp" x="906.5" y="91.3"/><use href="#insp" x="1085.5" y="91.3"/>
<use href="#lock" x="1038" y="88.5"/><use href="#pmenu" x="1051" y="93"/>
<use href="#lock" x="1315" y="88.5"/><use href="#pmenu" x="1328" y="93"/>
</svg>
<!--/ICONS-->
<!-- PANELS -->
</div>
</body></html>
